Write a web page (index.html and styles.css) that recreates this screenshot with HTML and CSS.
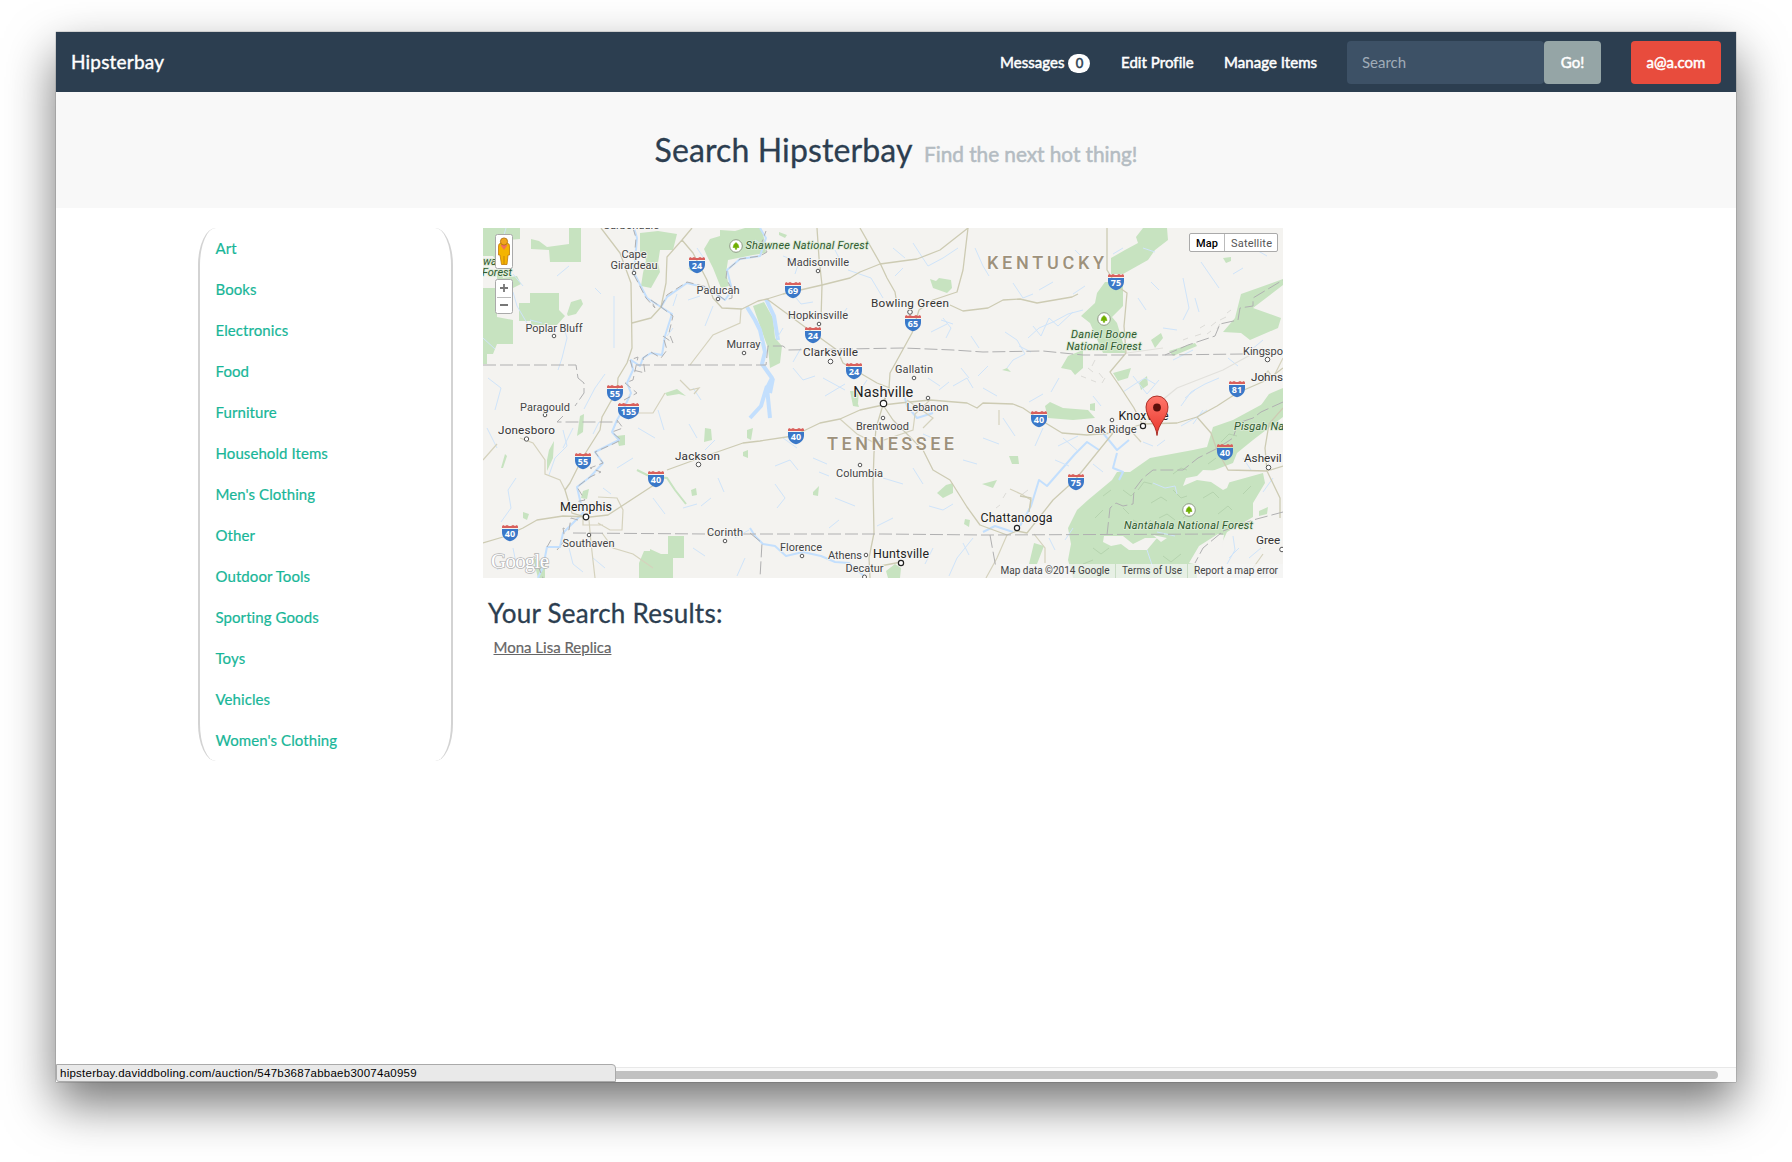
FILE: index.html
```html
<!DOCTYPE html>
<html lang="en">
<head>
<meta charset="utf-8">
<title>Hipsterbay</title>
<link rel="stylesheet" href="styles.css">
</head>
<body>
<div class="window">
  <nav class="navbar">
    <a class="brand">Hipsterbay</a>
    <ul class="nav-links">
      <li class="nav-messages">Messages <span class="badge">0</span></li>
      <li class="nav-profile">Edit Profile</li>
      <li class="nav-items">Manage Items</li>
    </ul>
    <form class="search">
      <input class="search-input" type="text" placeholder="Search">
      <button class="btn btn-go" type="button">Go!</button>
    </form>
    <button class="btn btn-user" type="button">a@a.com</button>
  </nav>
  <header class="page-header">
    <h1>Search Hipsterbay <small>Find the next hot thing!</small></h1>
  </header>
  <main class="content">
    <ul class="categories">
      <li>Art</li><li>Books</li><li>Electronics</li><li>Food</li><li>Furniture</li><li>Household Items</li><li>Men's Clothing</li><li>Other</li><li>Outdoor Tools</li><li>Sporting Goods</li><li>Toys</li><li>Vehicles</li><li>Women's Clothing</li>
    </ul>
    <section class="results">
      <svg class="map" width="800" height="350" viewBox="0 0 800 350">
        <defs>
          <linearGradient id="pinFill" x1="0" y1="0" x2="0" y2="1"><stop offset="0" stop-color="#ff776b"/><stop offset="1" stop-color="#e8352b"/></linearGradient>
          <g id="shield"><path d="M-8-4H8V-1C8 4 5 7 0 8.300C-5 7-8 4-8-1Z" fill="#3a78c8"/><path d="M-8-5V-6.500L-7-8-5-7-3-8-1-7H1L3-8 5-7 7-8 8-6.500V-5Z" fill="#d9605c"/></g>
          <g id="wideShield"><path d="M-10.500-4H10.500V-1C10.500 4 6 7 0 8.300C-6 7-10.500 4-10.500-1Z" fill="#3a78c8"/><path d="M-10.500-5V-6.500L-9-8-7-7-5-8-2-7H2L5-8 7-7 9-8 10.500-6.500V-5Z" fill="#d9605c"/></g>
          <g id="park"><circle r="6.300" fill="#fff" stroke="#8f9b86" stroke-width="1"/><path d="M0-3.500L2-1.500 3 1.500H.7V3.300H-.7V1.500H-3L-2-1.500Z" fill="#6fae00" stroke="#6fae00" stroke-width=".6"/></g>
        </defs>
        <rect width="800" height="350" fill="#f4f3f0"/>
        <g class="forest">
          <path d="M0 0H37V11L24 12 28 18H19L20 28 16 36 10 28H0ZM14 46L18 42 20 50 34 48 38 56 30 60 20 58 14 64ZM0 60H14V89L30 92V116H14L10 126H4V136H0ZM36 75H47V65H76V82L82 88 74 97H48V93H36ZM48 11L56 13 64 19 86 16V0H98V34H67L66 22 48 21Z"/>
          <path d="M84 86L88 74 98 71 100 76 93 86 85 88ZM157 5L175 3 194 6 192 14 190 22H177L175 35 177 44 168 60 158 58 160 45 163 32 157 25ZM221 21L227 11 237 8V2L252 3 262 0H278L281 10 283 25 270 27 245 32 243 45 246 58 238 60 230 40 224 28Z"/>
          <path d="M270 78L281 74 290 90 292 110 299 118 297 135 287 140 285 120 277 98ZM447 51L453 53 456 50 468 52 469 60 464 65 450 60ZM296 4L304 7 302 10 296 7ZM367 163H376L375 175 370 178ZM182 165L194 161 203 168 196 166 184 168ZM205 40L215 38 218 44 208 43Z"/>
          <path d="M660 0H684L685 12 672 22 665 32 640 46H628V30L642 22 655 15 653 9ZM622 54H640V78L629 89 634 95 643 125H620L607 95 598 88 612 75 614 65ZM585 128L600 122V140L592 147 588 142 578 140ZM630 145L648 140 645 150 635 153ZM656 155L664 148 665 157 658 162ZM740 30L748 29V33L743 35ZM668 112L678 105 680 110 672 120Z"/>
          <path d="M758 66L775 60 800 51V57L770 80 798 90 795 100 767 112 758 105 740 104 752 90ZM686 123L712 115 714 118 690 128ZM776 180L786 166 800 160V180ZM562 178L567 174 580 180 605 182 612 190 590 192 565 190ZM607 176L612 175V183L607 182Z"/>
          <path d="M629 252L634 244H647L667 230 710 222 724 219 730 199 750 192 787 172 800 168V189L770 212 754 225 750 235 724 245 744 255 780 245 782 255 770 275V289L744 304 737 319 714 335V350H590L585 332 588 316 585 300 594 282 605 272Z"/>
          <path d="M156 350V335L161 323H167V321L178 326H185V308H201V330H190V350ZM403 343L412 336 418 340 417 350H405ZM50 330L62 335V350H55ZM97 188L101 186 100 204 94 208ZM71 213L70 230 64 243V232L66 222ZM133 208L142 207V217L136 218ZM222 200L228 201 229 212 221 214ZM18 240L22 226 24 228 20 240ZM264 202L270 200 268 212 264 210ZM40 284L46 286 44 292 40 290ZM260 224L265 222 265 230 260 228ZM208 262L213 260 214 267 209 268ZM100 263L106 261 104 271 98 270Z"/>
          <path d="M454 265L463 257 470 255V265L460 270ZM526 228L535 228 536 236 529 236ZM499 256L514 252 510 260ZM482 291L487 292 486 299 481 296ZM330 264L336 258 335 268 330 267ZM370 172L374 173 376 179 370 178ZM519 142L524 140 528 144ZM561 318L554 336H546L551 315ZM776 283L785 279 784 286 776 288Z"/>
          <path class="strip" d="M154 242L166 248 184 250 192 262 203 276"/>
        </g>
        <g fill="#f4f3f0"><path d="M700 258L703 250 714 248 720 242 745 243 748 250 744 260 740 262 728 254 714 252ZM621 308L640 308 650 316 662 310 674 310 664 322 646 322 638 316 628 318 620 314ZM670 307L684 310 678 314ZM706 335L716 318 735 306 741 307 739 320 716 337Z"/></g>
        <g class="terrain"><path d="M640 262l8 6 4-4M655 262l6-8 8 2M668 275l10-6 6 4M690 262l8 8 6-2M650 292l12 6 6-6M676 290l8-4 8 6M720 270l10-6 6 6M735 286l10-8 4 4M612 290l8-8M610 320l8 6 8-6M680 328l8 6 10-8M690 246l8-6 6 2M738 214l8-8 8 2M600 336l10-4M760 266l8-8M700 290l8-6M620 268l8-6M725 236l8-6M640 280l6 6"/><path d="M605 140l5 4M612 132l-3 6M616 145l4 5M598 148l5 2M608 152l5 2M622 150l-3 5M717 100l5-3M728 98l5-4M737 92l6-3M712 108l6-2M724 106l4-3M744 85l4-3M700 112l5-2M734 101l3-5M520 270l3-5M513 280l4-3M545 262l-8 6"/></g>
        <g class="water">
          <path class="lake" d="M264 79L272 92 277 102 282 124 279 136 289 150 284 160 287 190M283 71L291 88 295 112M284 158L278 178 267 190M290 150L287 165"/>
          <path class="river" d="M151 0L154 10 151 45 164 70 178 79 189 86 182 108 179 127 168 125 160 130 157 138 148 132 150 142 144 155 148 165 141 180 134 192 129 204 136 212 112 224 120 235 107 249 94 259 97 272 100 285 80 305 77 319 64 319 60 339 55 350"/>
          <path class="river" d="M178 79L184 69 204 55 224 60 242 72 249 62 244 42 257 31 277 28 283 10 277 0"/>
          <path class="river" d="M267 300L272 308 280 316 292 318 303 328 320 324 338 328 352 334 366 335 381 348M421 166L424 178 434 190 450 185M500 304L512 298 530 304M537 298L548 278 556 252 564 258 578 242 592 226 604 214 616 222M634 225L630 240 640 244 636 252M620 205L634 222 646 212"/>
          <path d="M0 110L12 121M30 64L34 78 48 102M80 96L84 110 79 130 75 142M86 38L74 48M131 68V120M101 181L112 160 122 146M23 0L19 14M47 92l12 3M112 60l6 6M205 72l12-4M194 66l-4 12M230 78l-8 20M30 46l10 12M214 20l8 12M190 100l-6 8"/>
          <path d="M5 150L18 160 12 182M80 202L84 218 72 230 66 247M33 250L25 262 28 280 18 294M90 200L80 220M4 200l10 20M116 194l-6 12M210 160l8 12M155 200L172 210M175 182l6 20M206 196l8 14M232 212l-10 10M200 280l14-4M235 250l6 14M150 230l-16 10M170 270l12 16M228 270l-10 8M120 260l8 6M30 320l4 20M10 330l5 12M86 320l4 16 10 8M210 320l12 8M252 310l14-8M262 330l-8 18M110 330l12 10"/>
          <path d="M272 12l12 8M300 28L316 34 312 46M310 66L318 76 330 74M365 42L388 50 400 70M410 20l12 10M430 15L445 38 460 30 475 20M352 22l6 12M492 20l8 18 6 10M530 55L540 70 550 66M460 90L468 100 463 110M448 104l16-8M458 92l12 4M488 108l8 12M522 104L534 112 542 126 530 132 524 140M536 118l12 6M300 100l-6 10M318 120l-8 14M310 140l10 12 12-4M340 150L362 162M342 168L362 156M384 152L376 164M445 150l12 8M470 158L484 150 490 160M500 160l14 8M505 138l-10 10M456 162l10-8M478 140l8 10M420 40l-8 8M364 80l-8 12"/>
          <path d="M545 110L556 100 570 94 585 86 600 82M550 98L558 108 566 90 575 98 590 84M556 62L570 54M604 34L592 22M668 54L676 62M700 50L706 80 700 92M718 34L736 60M712 70l4 14M660 20l12 4M640 164L652 156 662 150 672 156M650 148L664 166 676 152M698 178L708 164 722 156 736 150M702 170l10-8M690 132l20-10M640 20l-10 6M735 14l12 8M770 20l14 8M760 40l-10 6M780 112l-12 10M610 168l8 10M576 150l-8 14M560 166l-14 8M745 130l10 8M590 66l12-8M655 70l8 12M680 100l14 2"/>
          <path d="M300 210l14 10M292 238L307 232 315 242M292 256L302 270 294 280M330 230L344 236M352 270L372 278M400 250L420 256M440 206l14 6M446 278L460 282 470 276M500 210L516 216M520 190l12 18M410 290l-16 8M430 240l10 16M480 232l14 4M356 292l-10 8M336 244l10 4M490 310L474 330 466 348M450 320l-8 16M480 315l6 12M426 322l-10 10M560 200l-8 18M580 210l16 14M575 218l20-10M572 232l14 6M670 255L682 260 692 258 694 266M698 198L712 190 724 182M710 196l10-14M660 214l10 4M674 218l8-6M664 322L670 340M750 308L752 322 744 336M756 320l-10 10M766 330l12-10M674 304L692 308M790 250l-10 14M760 230l8 12M590 300l-8 12M566 310l6 12M610 236l10 8"/>
        </g>
        <g class="minor"><path d="M0 232L14 216M37 210L50 215 62 232V246L77 252 82 262M258 81L257 95 230 107 207 137M197 152L207 162 216 160 211 166M182 165L170 185 154 185M115 269L134 270 140 282 139 302 127 302 115 295M100 289V297H120M106 292L108 315 112 350M119 305L130 320 150 326 170 340M357 191L374 206 392 215 430 202 432 186 447 172M516 182V197M527 261L540 267 548 272 547 280M650 205L658 214M551 306L562 320V335M524 307L514 330 503 350M780 326L770 340M779 150L785 143 790 150 800 130M440 200L450 190 424 172"/><path class="faint" d="M660 198L672 178 694 160 740 142 780 120M644 125L680 120"/></g>
        <g class="road">
          <path d="M118 0L137 25 148 55 149 120 144 135 135 150 134 165 128 173 119 189 117 202 100 229 87 255 82 262 89 285 103 289M209 0L199 12 184 29 183 55 178 79 168 90 149 95M199 12L210 25 224 52 230 70 239 80 259 81 275 73 284 71 300 66 339 57 367 50 377 44 397 36 434 31 457 22 485 0"/>
          <path d="M284 71L322 99 354 122 360 135 394 155 407 160M334 0L336 30 339 57 338 92M377 0L397 35 404 50 412 64 414 76M485 0L480 42 474 64 450 72 436 82 429 105 407 145 406 160 400 175M467 77L480 83 505 80 520 72 537 71 554 75 589 69 595 66"/>
          <path d="M624 0V42L634 58 644 65 641 98 643 125 627 144 638 160 651 180 660 198M0 315L20 309 40 300 54 292 80 288 107 289 125 287 174 255 M184 242L217 230 260 215 277 213 310 208 337 195 357 191 377 182 400 177 417 175 447 172 484 175 494 180 500 175 530 176 540 180 556 191 579 205 604 207 630 205 660 196 694 195 714 189 734 178 754 165 784 152 800 140"/>
          <path d="M714 189L728 205 734 222 745 242 784 243 800 238M784 243L797 270V290M784 243L782 220 786 196 800 180M630 205L592 252 570 272 544 305 534 303M537 268L548 270 546 284M400 177L410 192 440 222 450 242 467 252 484 279 497 297 524 307 534 303M406 160L400 177 393 200 391 225 390 255 391 305 386 330 387 350M387 340L418 334"/>
        </g>
        <g class="border">
          <path d="M0 137H93L95 150 101 155V165L92 178M80 188L74 194H135M154 137H283L285 118H300L305 122 420 120 470 122 500 124 560 123 600 127 680 127 760 126M90 305L224 306H400L500 307 740 306M267 305L279 315 277 350M507 307L513 340M682 127L705 117 732 108 737 96 755 92 757 80 770 78V70L800 52M738 305L720 320 712 335M740 303L770 292 800 284M624 307L627 280 633 275 640 278 650 276 651 262 660 250 670 242 700 242 715 230 735 220 750 210 755 195 770 190 778 184 800 174"/>
          <path class="river-border" d="M150 0L153 10 150 45 163 70 172 80 168 72 178 79 190 88 186 105 190 115 180 108 184 122 178 130 168 124 160 130 162 145 150 142 147 132 155 129 150 152 142 155 154 165 141 172 M134 192L140 200 129 204 138 212 130 216 112 224 120 235 107 240 118 244 107 249 94 259 102 272 92 274M95 292L88 290 86 302 80 300 82 312 74 322M64 319L68 312M60 339L66 330 55 338 60 350M178 79L184 67 204 54 224 59 242 72 249 70 249 62 243 50 244 42 257 31 277 28 284 24 279 14 283 3"/>
        </g>
        <g class="dots"><circle cx="151" cy="45" r="1.800"/><circle cx="235" cy="71" r="1.800"/><circle cx="71" cy="108" r="1.800"/><circle cx="261" cy="125" r="1.800"/><circle cx="62" cy="187" r="1.800"/><circle cx="43.500" cy="211" r="2.200"/><circle cx="335" cy="43" r="1.800"/><circle cx="427" cy="84" r="2.300"/><circle cx="336" cy="96" r="1.800"/><circle cx="347.500" cy="133.500" r="2.300"/><circle cx="431" cy="150" r="1.800"/><circle cx="445" cy="170" r="1.800"/><circle class="city" cx="400.500" cy="175.500" r="3.200"/><circle cx="400" cy="190" r="1.800"/><circle cx="784.500" cy="131.500" r="2.300"/><circle cx="215.500" cy="236.500" r="2.300"/><circle class="city" cx="103" cy="289" r="2.800"/><circle cx="106" cy="307" r="1.800"/><circle cx="242" cy="313" r="1.800"/><circle cx="377" cy="237" r="1.800"/><circle cx="319" cy="328" r="1.800"/><circle cx="383" cy="327" r="1.800"/><circle class="city" cx="418" cy="335" r="2.600"/><circle cx="381.500" cy="349" r="2"/><circle class="city" cx="534" cy="300" r="2.600"/><circle class="city" cx="660" cy="198" r="2.600"/><circle cx="629" cy="192" r="1.800"/><circle cx="785.500" cy="239.500" r="2.300"/><circle cx="799" cy="321.500" r="2.300"/></g>
        <g class="town">
          <text x="148" y="1">Carbondale</text><text x="151" y="29.500">Cape</text><text x="151" y="40.500" textLength="47">Girardeau</text><text x="235" y="65.500" textLength="43">Paducah</text><text x="71" y="103.500" textLength="57">Poplar Bluff</text><text x="260.500" y="120" textLength="34">Murray</text><text x="62" y="182.500" textLength="50">Paragould</text><text x="335" y="38" textLength="62">Madisonville</text><text x="335" y="91" textLength="60">Hopkinsville</text><text x="431" y="145" textLength="38">Gallatin</text><text x="444.500" y="183" textLength="42">Lebanon</text><text x="399.500" y="202" textLength="53">Brentwood</text><text x="376.500" y="248.500" textLength="47">Columbia</text><text x="105.500" y="318.500" textLength="52">Southaven</text><text x="242" y="307.500" textLength="36">Corinth</text><text x="318" y="322.500" textLength="42">Florence</text><text x="362" y="330.500" textLength="34">Athens</text><text x="381.500" y="343.500" textLength="38">Decatur</text><text x="628.500" y="204.500" textLength="50">Oak Ridge</text><text class="from" x="760" y="127">Kingspo</text>
        </g>
        <g class="big-town">
          <text x="43.500" y="206" textLength="57">Jonesboro</text><text x="427" y="79" textLength="78">Bowling Green</text><text x="347.500" y="128" textLength="55">Clarksville</text><text x="214.500" y="231.500" textLength="45">Jackson</text><text class="from" x="768" y="152.500">Johns</text><text class="from" x="761" y="234">Ashevil</text><text class="from" x="773" y="316">Gree</text>
        </g>
        <g class="metro"><text x="103" y="283" textLength="52">Memphis</text><text x="418" y="329.500" textLength="56">Huntsville</text><text x="533.500" y="294" textLength="72">Chattanooga</text><text x="660.500" y="192" textLength="50">Knoxville</text><text class="capital" x="400.300" y="168.500" textLength="60">Nashville</text></g>
        <g class="park-name"><text class="from" x="0" y="36.500">wain</text><text class="from" x="-1" y="48">Forest</text><text x="324" y="21" textLength="123">Shawnee National Forest</text><text x="621" y="110" textLength="66">Daniel Boone</text><text x="621" y="122" textLength="75">National Forest</text><text x="705.500" y="301" textLength="129">Nantahala National Forest</text><text class="from" x="751" y="202" textLength="50">Pisgah Na</text></g>
        <g class="state"><text x="504" y="41" textLength="117">KENTUCKY</text><text x="344" y="222" textLength="127">TENNESSEE</text></g>
        <use href="#park" x="253" y="18"/><use href="#park" x="621" y="91"/><use href="#park" x="706" y="282"/>
        <g class="route">
          <use href="#shield" x="214" y="37"/><text x="214" y="41">24</text><use href="#shield" x="132" y="165"/><text x="132" y="169">55</text><use href="#wideShield" x="145.500" y="183"/><text x="145.500" y="187">155</text><use href="#shield" x="310" y="62"/><text x="310" y="66">69</text><use href="#shield" x="430" y="95"/><text x="430" y="99">65</text><use href="#shield" x="330" y="107"/><text x="330" y="111">24</text><use href="#shield" x="371" y="143"/><text x="371" y="147">24</text><use href="#shield" x="633" y="54"/><text x="633" y="58">75</text><use href="#shield" x="754" y="161"/><text x="754" y="165">81</text><use href="#shield" x="100" y="233"/><text x="100" y="237">55</text><use href="#shield" x="173" y="251"/><text x="173" y="255">40</text><use href="#shield" x="27" y="305"/><text x="27" y="309">40</text><use href="#shield" x="313" y="208"/><text x="313" y="212">40</text><use href="#shield" x="556" y="191"/><text x="556" y="195">40</text><use href="#shield" x="593" y="254"/><text x="593" y="258">75</text><use href="#shield" x="742" y="224"/><text x="742" y="228">40</text>
        </g>
        <path d="M674 207.500C673 195 663 190 663 179A11 11 0 0 1 685 179C685 190 675 195 674 207.500Z" fill="url(#pinFill)" stroke="#a3251d" stroke-width=".9"/><circle cx="674" cy="179.500" r="3.900" fill="#5c0f0b"/>
        <text class="google" x="8" y="340" textLength="58">Google</text>
        <rect x="517" y="336" width="283" height="14" fill="#f5f5f5" fill-opacity=".7"/>
        <path d="M632.500 336V350M704.500 336V350" stroke="#c8dcc4"/>
        <g class="legal"><text x="517.500" y="346" textLength="109">Map data ©2014 Google</text><text x="639" y="346" textLength="60">Terms of Use</text><text x="711" y="346" textLength="84">Report a map error</text></g>
        <g class="control">
          <rect x="12.500" y="6.500" width="17" height="34" rx="2"/><rect x="12.500" y="51.500" width="17" height="34" rx="2"/><rect x="706.500" y="5.500" width="88" height="18" rx="1.500"/>
          <path d="M14 69.500H28M741.500 6V23" stroke="#bbb"/>
        </g>
        <path d="M17 60H25M21 56V64M17 77H25" stroke="#777" stroke-width="1.800"/>
        <path d="M15.500 19Q15 15.500 18 15H24Q27 15.500 26.500 19L26.500 27H25L24 36.500H18.500L17 27H15.500Z" fill="#f4b400" stroke="#c17a08" stroke-width=".8"/><path d="M17.500 17H24.500L21 22Z" fill="#f0715c"/><path d="M21 28V36" stroke="#c17a08" stroke-width=".8"/><circle cx="21" cy="13.500" r="3.600" fill="#f0a61c" stroke="#a86a10" stroke-width=".8"/>
        <g class="map-type"><text class="active" x="724" y="18.500" textLength="22">Map</text><text x="768.500" y="18.500" textLength="41">Satellite</text></g>
      </svg>
      <h3>Your Search Results:</h3>
      <a class="result-link">Mona Lisa Replica</a>
    </section>
  </main>
  <footer class="window-bottom">
    <div class="status">hipsterbay.daviddboling.com/auction/547b3687abbaeb30074a0959</div>
    <div class="scroll-track"><div class="scroll-thumb"></div></div>
  </footer>
</div>
</body>
</html>
```
FILE: styles.css
```css
* { box-sizing: border-box; }
body { margin: 0; height: 1162px; padding: 32px 56px; background: #fff; overflow: hidden; font-family: Lato, sans-serif; font-size: 15px; color: #2c3e50; }
ul { margin: 0; padding: 0; list-style: none; }
.window { width: 1680px; height: 1050px; display: flex; flex-direction: column; background: #fff; box-shadow: 0 0 1px rgba(0,0,0,.65), 0 22px 46px rgba(0,0,0,.55); }
.navbar { flex: none; height: 60px; padding: 0 15px; display: flex; align-items: center; background: #2c3e50; color: #fff; }
.brand { margin-bottom: 2px; font-size: 19px; letter-spacing: .2px; -webkit-text-stroke: .4px; }
.nav-links { display: flex; margin-left: auto; font-weight: 400; letter-spacing: .05px; -webkit-text-stroke: .5px; white-space: nowrap; }
.nav-links li { padding-left: 15px; line-height: 20px; }
.nav-messages { width: 121px; }
.nav-profile { width: 103px; }
.nav-items { width: 123px; }
.badge { display: inline-block; width: 22px; height: 19px; border-radius: 10px; background: #fff; color: #2c3e50; font-size: 13px; line-height: 19px; text-align: center; }
.search { display: flex; width: 254px; margin: 1px 30px 0 15px; }
.search-input { width: 197px; height: 43px; padding: 0 15px 2px; border: 0; border-radius: 4px; background: #3d5166; font: 15px Lato, sans-serif; color: #fff; }
.search-input::placeholder { color: #a0acb8; opacity: 1; }
.btn { height: 43px; padding: 0 0 2px; border: 0; border-radius: 4px; font: 15px Lato, sans-serif; color: #fff; -webkit-text-stroke: .5px; }
.btn-go { width: 57px; background: #95a5a6; }
.btn-user { width: 90px; margin-top: 1px; background: #e84c3d; }
.page-header { flex: none; height: 116px; padding-top: 38px; background: #f8f8f8; text-align: center; }
h1 { margin: 0; font-size: 32px; font-weight: 400; line-height: 40px; letter-spacing: .12px; -webkit-text-stroke: .3px; }
h1 small { margin-left: 4px; font-size: 20.8px; letter-spacing: -.04px; color: #b4bcc2; -webkit-text-stroke: .5px; }
.content { flex: 1; display: flex; align-items: flex-start; gap: 30px; padding: 20px 0 0 142px; }
.categories { width: 255px; height: 533px; padding-left: 15.500px; border: solid #d3d3d3; border-width: 0 2px; border-radius: 7%; color: #18b698; }
.categories li { height: 41px; line-height: 41px; letter-spacing: .08px; -webkit-text-stroke: .2px; }
.results { width: 800px; }
.map { display: block; font-family: Roboto, sans-serif; }
h3 { margin: 20px 0 0 5px; font-size: 26px; font-weight: 400; line-height: 31px; letter-spacing: .26px; -webkit-text-stroke: .3px; }
.result-link { display: block; margin: 7px 0 0 10.500px; line-height: 22px; color: #666; text-decoration: underline; -webkit-text-stroke: .2px; }
.window-bottom { height: 18px; flex: none; display: flex; align-items: flex-end; }
.status { width: 560px; height: 18px; padding-left: 3px; border: 1px solid #aaa; border-radius: 0 4px 0 3px; background: #e9e9e9; font: 11.500px/16px "Liberation Sans", sans-serif; letter-spacing: .25px; color: #000; white-space: nowrap; }
.scroll-track { flex: 1; height: 15px; padding: 3px 18px 0 0; border-top: 1px solid #e8e8e8; background: #fafafa; }
.scroll-thumb { height: 8px; border-radius: 0 4px 4px 0; background: #c1c1c1; }

.forest { fill: #c7e3c0; }
.strip { fill: none; stroke: #c7e3c0; stroke-width: 2; }
.terrain { fill: none; stroke: #b5d3ae; stroke-width: 1; }
.terrain path + path { stroke: #dddcd8; }
.water { fill: none; stroke: #cfe4fa; stroke-width: 1; stroke-linejoin: round; }
.lake { stroke-width: 4; stroke: #c3dffd; }
.river { stroke-width: 2; stroke: #c3dffd; }
.road { fill: none; stroke: #cdcbb3; stroke-width: 1.300; stroke-linejoin: round; }
.minor { fill: none; stroke: #d5d2bd; stroke-width: 1.200; }
.minor .faint { stroke: #e2e1dc; }
.border { fill: none; stroke: #b0b0b1; stroke-width: 1; stroke-dasharray: 13 4; }
.river-border { stroke-dasharray: 8 4; }
.dots { fill: #fff; stroke: #555; stroke-width: 1; }
.dots .city { stroke: #222; stroke-width: 1.200; }
.map text { text-anchor: middle; }
.map text.from, .state text, .legal text, .map text.google { text-anchor: start; }
.town, .big-town, .metro, .park-name, .state { paint-order: stroke; stroke: #f8f7f5; stroke-opacity: .85; stroke-width: 2px; stroke-linejoin: round; }
.town { font-size: 11px; fill: #444; }
.big-town { font-size: 11.700px; fill: #333; }
.metro { font-size: 12.400px; fill: #222; }
.metro .capital { font-size: 14.500px; }
.park-name { font-size: 11px; font-style: italic; fill: #2f5a2f; stroke: #dcebd6; }
.state { font-size: 18px; fill: #9d917b; font-weight: 500; }
.route text { font: bold 9px "Open Sans", sans-serif; fill: #fff; }
.google { font: 21px "Liberation Serif", serif; fill: #fff; paint-order: stroke; stroke: #b5b5b5; stroke-width: 1.500px; }
.legal { font-size: 10px; fill: #444; }
.control rect { fill: #fff; stroke: #aaa; stroke-width: 1; }
.map-type { font-size: 11px; fill: #555; }
.map-type .active { font-weight: 500; fill: #000; }
```
